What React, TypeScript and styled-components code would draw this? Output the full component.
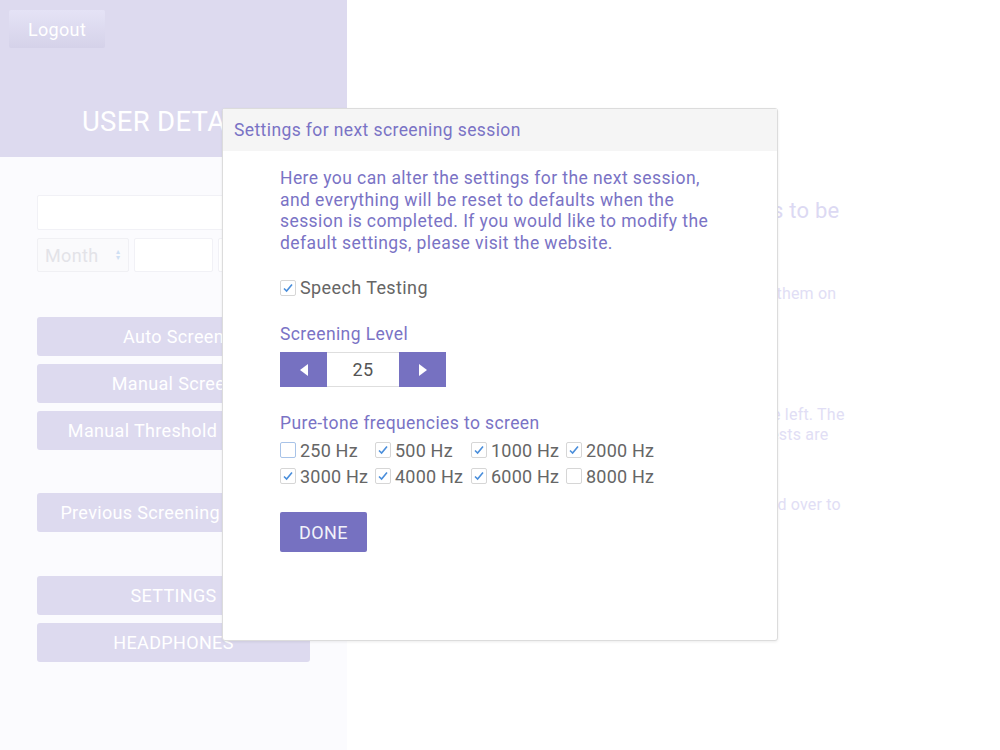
import React from "react";
import styled, { createGlobalStyle } from "styled-components";

const Global = createGlobalStyle`
  html, body { margin: 0; padding: 0; }
  body { font-family: Roboto, "Noto Sans", Arial, sans-serif; background: #ffffff; letter-spacing: 0.35px; }
  * { box-sizing: border-box; }
`;

const Page = styled.div`
  position: relative;
  display: flex;
  width: 1000px;
  height: 750px;
  overflow: hidden;
  background: #ffffff;
`;

const LeftPanel = styled.aside`
  width: 347px;
  flex: none;
  display: flex;
  flex-direction: column;
  background: #fbfbfe;
`;

const PanelHeader = styled.header`
  height: 157px;
  background: #dddaef;
  display: flex;
  flex-direction: column;
  padding: 10px 0 0 9px;
`;

const LogoutButton = styled.button`
  width: 96px;
  height: 38px;
  border: none;
  border-radius: 2px;
  background: linear-gradient(#e5e3f6, #d5d2e9);
  color: #ffffff;
  font-family: Roboto, sans-serif;
  font-size: 18px;
  letter-spacing: 0.35px;
  padding: 0;
`;

const PanelTitle = styled.h1`
  margin: 57px 0 0 -9px;
  text-align: center;
  color: #ffffff;
  font-weight: 400;
  font-size: 27.5px;
  letter-spacing: 0.3px;
`;

const PanelBody = styled.div`
  display: flex;
  flex-direction: column;
  padding: 38px 37px 0 37px;
`;

const TextInput = styled.div`
  height: 35px;
  background: #ffffff;
  border: 1px solid #f1f1f6;
  border-radius: 2px;
`;

const DateRow = styled.div`
  display: flex;
  gap: 5px;
  margin-top: 8px;
`;

const MonthSelect = styled.div`
  width: 92px;
  height: 34px;
  background: #fafafc;
  border: 1px solid #f0f0f4;
  border-radius: 2px;
  display: flex;
  align-items: center;
  justify-content: space-between;
  padding: 0 8px 0 7px;
  color: #e3e3e8;
  font-size: 18px;
`;

const Arrows = styled.span`
  font-size: 8px;
  color: #cfe0f4;
  line-height: 6px;
  display: flex;
  flex-direction: column;
`;

const DateInput = styled.div<{ $w: number }>`
  width: ${(p) => p.$w}px;
  height: 34px;
  background: #ffffff;
  border: 1px solid #f1f1f6;
  border-radius: 2px;
`;

const ButtonGroup = styled.div<{ $top: number }>`
  display: flex;
  flex-direction: column;
  gap: 8px;
  margin-top: ${(p) => p.$top}px;
`;

const PanelButton = styled.div`
  height: 39px;
  background: #dddaef;
  border-radius: 3px;
  color: #ffffff;
  font-size: 18px;
  display: flex;
  align-items: center;
  justify-content: center;
  white-space: nowrap;
`;

const RightArea = styled.main`
  flex: 1;
  padding: 197px 0 0 60px;
  display: flex;
  flex-direction: column;
  color: #e1def5;
  letter-spacing: 0.2px;
`;

const FadedTitle = styled.div`
  font-size: 22px;
  color: #dcd9f3;
  white-space: nowrap;
  line-height: 28px;
`;

const FadedLine = styled.div<{ $top?: number }>`
  font-size: 16px;
  line-height: 20px;
  white-space: nowrap;
  margin-top: ${(p) => p.$top ?? 0}px;
`;

const Modal = styled.section`
  position: absolute;
  left: 222px;
  top: 108px;
  width: 556px;
  height: 533px;
  background: #ffffff;
  border: 1px solid #dcdcdc;
  border-radius: 3px;
  box-shadow: 0 1px 3px rgba(0, 0, 0, 0.08);
  display: flex;
  flex-direction: column;
`;

const ModalHeader = styled.div`
  height: 42px;
  background: #f5f5f5;
  display: flex;
  align-items: center;
  padding-left: 11px;
  color: #7a73c5;
  font-size: 17.5px;
  letter-spacing: 0.4px;
`;

const ModalBody = styled.div`
  padding: 17px 0 0 57px;
  display: flex;
  flex-direction: column;
`;

const Intro = styled.p`
  margin: 0;
  width: 440px;
  color: #7a73c5;
  font-size: 17.5px;
  line-height: 21.5px;
  letter-spacing: 0.42px;
`;

const CheckRow = styled.label`
  display: flex;
  align-items: center;
  gap: 4px;
  color: #666666;
  font-size: 18px;
  white-space: nowrap;
  letter-spacing: 0.2px;
`;

const SpeechRow = styled(CheckRow)`
  margin-top: 23px;
  letter-spacing: 0.4px;
`;

const SectionLabel = styled.div<{ $top: number }>`
  margin-top: ${(p) => p.$top}px;
  color: #7a73c5;
  font-size: 17.5px;
  line-height: 22px;
  letter-spacing: 0.4px;
`;

const Stepper = styled.div`
  display: flex;
  margin-top: 7px;
  height: 35px;
  width: 166px;
`;

const StepButton = styled.div`
  width: 47px;
  height: 35px;
  background: #7671c1;
  display: flex;
  align-items: center;
  justify-content: center;
`;

const StepValue = styled.div`
  width: 72px;
  height: 35px;
  border-top: 1px solid #dedede;
  border-bottom: 1px solid #dedede;
  display: flex;
  align-items: center;
  justify-content: center;
  color: #555555;
  font-size: 18px;
`;

const FreqGrid = styled.div`
  display: grid;
  grid-template-columns: 95px 96px 95px 95px;
  grid-auto-rows: 26px;
  margin-top: 3px;
  align-items: center;
`;

const Box = styled.span<{ $focus?: boolean }>`
  width: 16px;
  height: 16px;
  flex: none;
  border: 1px solid ${(p) => (p.$focus ? "#a8c3e8" : "#d6d6d6")};
  border-radius: 2px;
  background: #ffffff;
  display: inline-flex;
  align-items: center;
  justify-content: center;
`;

const DoneButton = styled.button`
  margin-top: 23px;
  width: 87px;
  height: 40px;
  border: none;
  border-radius: 2px;
  background: #7671c1;
  color: #f2f2fa;
  font-family: Roboto, sans-serif;
  font-size: 18px;
  letter-spacing: 0.4px;
  padding: 0;
`;

const Check = ({ checked, focus }: { checked: boolean; focus?: boolean }) => (
  <Box $focus={focus}>
    {checked && (
      <svg width="12" height="12" viewBox="0 0 12 12">
        <path d="M2 6.5 L4.6 9 L10 2.5" fill="none" stroke="#4a8edb" strokeWidth="1.6" />
      </svg>
    )}
  </Box>
);

const Triangle = ({ dir }: { dir: "left" | "right" }) => (
  <svg width="10" height="14" viewBox="0 0 10 14">
    {dir === "left" ? <path d="M9 1 L1 7 L9 13 Z" fill="#fff" /> : <path d="M1 1 L9 7 L1 13 Z" fill="#fff" />}
  </svg>
);

const freqs: [string, boolean][] = [
  ["250 Hz", false],
  ["500 Hz", true],
  ["1000 Hz", true],
  ["2000 Hz", true],
  ["3000 Hz", true],
  ["4000 Hz", true],
  ["6000 Hz", true],
  ["8000 Hz", false],
];

export default function App() {
  return (
    <Page>
      <Global />
      <LeftPanel>
        <PanelHeader>
          <LogoutButton>Logout</LogoutButton>
          <PanelTitle>USER DETAILS</PanelTitle>
        </PanelHeader>
        <PanelBody>
          <TextInput />
          <DateRow>
            <MonthSelect>
              Month
              <Arrows>
                <span>▴</span>
                <span>▾</span>
              </Arrows>
            </MonthSelect>
            <DateInput $w={79} />
            <DateInput $w={92} />
          </DateRow>
          <ButtonGroup $top={45}>
            <PanelButton>Auto Screen</PanelButton>
            <PanelButton>Manual Screen</PanelButton>
            <PanelButton>Manual Threshold Screen</PanelButton>
          </ButtonGroup>
          <ButtonGroup $top={43}>
            <PanelButton>Previous Screening Results</PanelButton>
          </ButtonGroup>
          <ButtonGroup $top={44}>
            <PanelButton>SETTINGS</PanelButton>
            <PanelButton>HEADPHONES</PanelButton>
          </ButtonGroup>
        </PanelBody>
      </LeftPanel>
      <RightArea>
        <FadedTitle>Please select the next screening tests to be</FadedTitle>
        <FadedTitle>performed</FadedTitle>
        <FadedLine $top={31}>Enter the details of the person and then search for them on</FadedLine>
        <FadedLine $top={101}>Select the type of screening from the options to the left. The</FadedLine>
        <FadedLine>results from any previously completed screening tests are</FadedLine>
        <FadedLine $top={50}>When the screening session is finished, please hand over to</FadedLine>
      </RightArea>
      <Modal>
        <ModalHeader>Settings for next screening session</ModalHeader>
        <ModalBody>
          <Intro>
            Here you can alter the settings for the next session, and everything will be reset to defaults when the
            session is completed. If you would like to modify the default settings, please visit the website.
          </Intro>
          <SpeechRow>
            <Check checked />
            Speech Testing
          </SpeechRow>
          <SectionLabel $top={25}>Screening Level</SectionLabel>
          <Stepper>
            <StepButton>
              <Triangle dir="left" />
            </StepButton>
            <StepValue>25</StepValue>
            <StepButton>
              <Triangle dir="right" />
            </StepButton>
          </Stepper>
          <SectionLabel $top={25}>Pure-tone frequencies to screen</SectionLabel>
          <FreqGrid>
            {freqs.map(([label, on], i) => (
              <CheckRow key={label}>
                <Check checked={on} focus={i === 0} />
                {label}
              </CheckRow>
            ))}
          </FreqGrid>
          <DoneButton>DONE</DoneButton>
        </ModalBody>
      </Modal>
    </Page>
  );
}
